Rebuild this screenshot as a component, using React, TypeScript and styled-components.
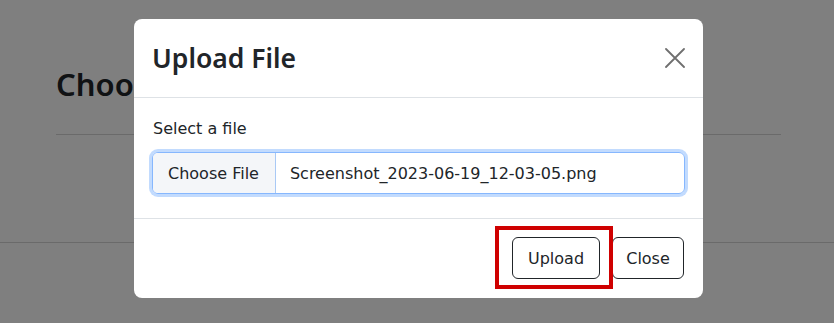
import React from "react";
import styled, { createGlobalStyle } from "styled-components";

const GlobalStyle = createGlobalStyle`
  html, body {
    margin: 0;
    background: #ffffff;
    color: #212529;
    font-family: "DejaVu Sans", "Noto Sans", sans-serif;
    font-size: 16px;
  }
`;

const Page = styled.div`
  padding: 66px 53px 0 56px;
`;

const PageTitle = styled.h2`
  margin: 0;
  font-family: "Noto Sans", sans-serif;
  font-weight: 600;
  font-size: 31px;
  line-height: 37px;
  color: #212529;
`;

const TitleRule = styled.hr`
  margin: 31px 0 0;
  border: 0;
  border-top: 1px solid #d4d4d4;
`;

const PageFooter = styled.footer`
  margin: 107px -53px 0 -56px;
  height: 80px;
  border-top: 1px solid #d4d4d4;
`;

const Backdrop = styled.div`
  position: fixed;
  inset: 0;
  background: rgba(0, 0, 0, 0.5);
`;

const Modal = styled.div`
  position: fixed;
  top: 19px;
  left: 134px;
  width: 569px;
  background: #ffffff;
  border-radius: 8px;
`;

const Header = styled.div`
  display: flex;
  align-items: center;
  justify-content: space-between;
  height: 78px;
  padding: 0 18px 0 18px;
  border-bottom: 1px solid #dee2e6;
`;

const Title = styled.h5`
  margin: 0;
  font-family: "Noto Sans", sans-serif;
  font-weight: 600;
  font-size: 26.5px;
  line-height: 32px;
  color: #212529;
`;

const CloseX = styled.button`
  display: flex;
  width: 20px;
  height: 20px;
  padding: 0;
  border: 0;
  background: transparent;
  color: #6f6f6f;
  cursor: pointer;
`;

const Body = styled.div`
  padding: 19px 18px 24px;
  border-bottom: 1px solid #dee2e6;
`;

const Label = styled.label`
  display: block;
  margin-bottom: 11px;
  padding-left: 1px;
  line-height: 24px;
  color: #212529;
`;

const FileInput = styled.div`
  display: flex;
  height: 42px;
  box-sizing: border-box;
  border: 1px solid #86b7fe;
  border-radius: 6px;
  box-shadow: 0 0 0 3px rgba(13, 110, 253, 0.25);
  overflow: hidden;
`;

const FileButton = styled.span`
  display: flex;
  align-items: center;
  padding: 0 16px 0 15px;
  background: #f4f6f9;
  border-right: 1px solid #a9c9f5;
  color: #212529;
`;

const FileName = styled.span`
  display: flex;
  align-items: center;
  padding-left: 14px;
  color: #212529;
`;

const Footer = styled.div`
  display: flex;
  justify-content: flex-end;
  align-items: center;
  gap: 12px;
  padding: 18px 19px 19px;
`;

const Button = styled.button<{ $width: number }>`
  width: ${(p) => p.$width}px;
  height: 42px;
  box-sizing: border-box;
  padding: 0;
  border: 1px solid #212529;
  border-radius: 6px;
  background: #ffffff;
  color: #212529;
  font-family: inherit;
  font-size: 16px;
`;

const Marked = styled.span`
  position: relative;
  display: flex;
`;

const Highlight = styled.span`
  position: absolute;
  top: -11px;
  left: -17px;
  right: -13px;
  bottom: -10px;
  border: 4px solid #cf0000;
  pointer-events: none;
`;

export default function App() {
  return (
    <>
      <GlobalStyle />
      <Page>
        <PageTitle>Choose a file to upload</PageTitle>
        <TitleRule />
        <PageFooter />
      </Page>
      <Backdrop />
      <Modal>
        <Header>
          <Title>Upload File</Title>
          <CloseX aria-label="Close">
            <svg width="20" height="20" viewBox="0 0 20 20">
              <path
                d="M1 1 L19 19 M19 1 L1 19"
                stroke="currentColor"
                strokeWidth="1.8"
                strokeLinecap="round"
              />
            </svg>
          </CloseX>
        </Header>
        <Body>
          <Label>Select a file</Label>
          <FileInput>
            <FileButton>Choose File</FileButton>
            <FileName>Screenshot_2023-06-19_12-03-05.png</FileName>
          </FileInput>
        </Body>
        <Footer>
          <Marked>
            <Button $width={88}>Upload</Button>
            <Highlight />
          </Marked>
          <Button $width={72}>Close</Button>
        </Footer>
      </Modal>
    </>
  );
}
